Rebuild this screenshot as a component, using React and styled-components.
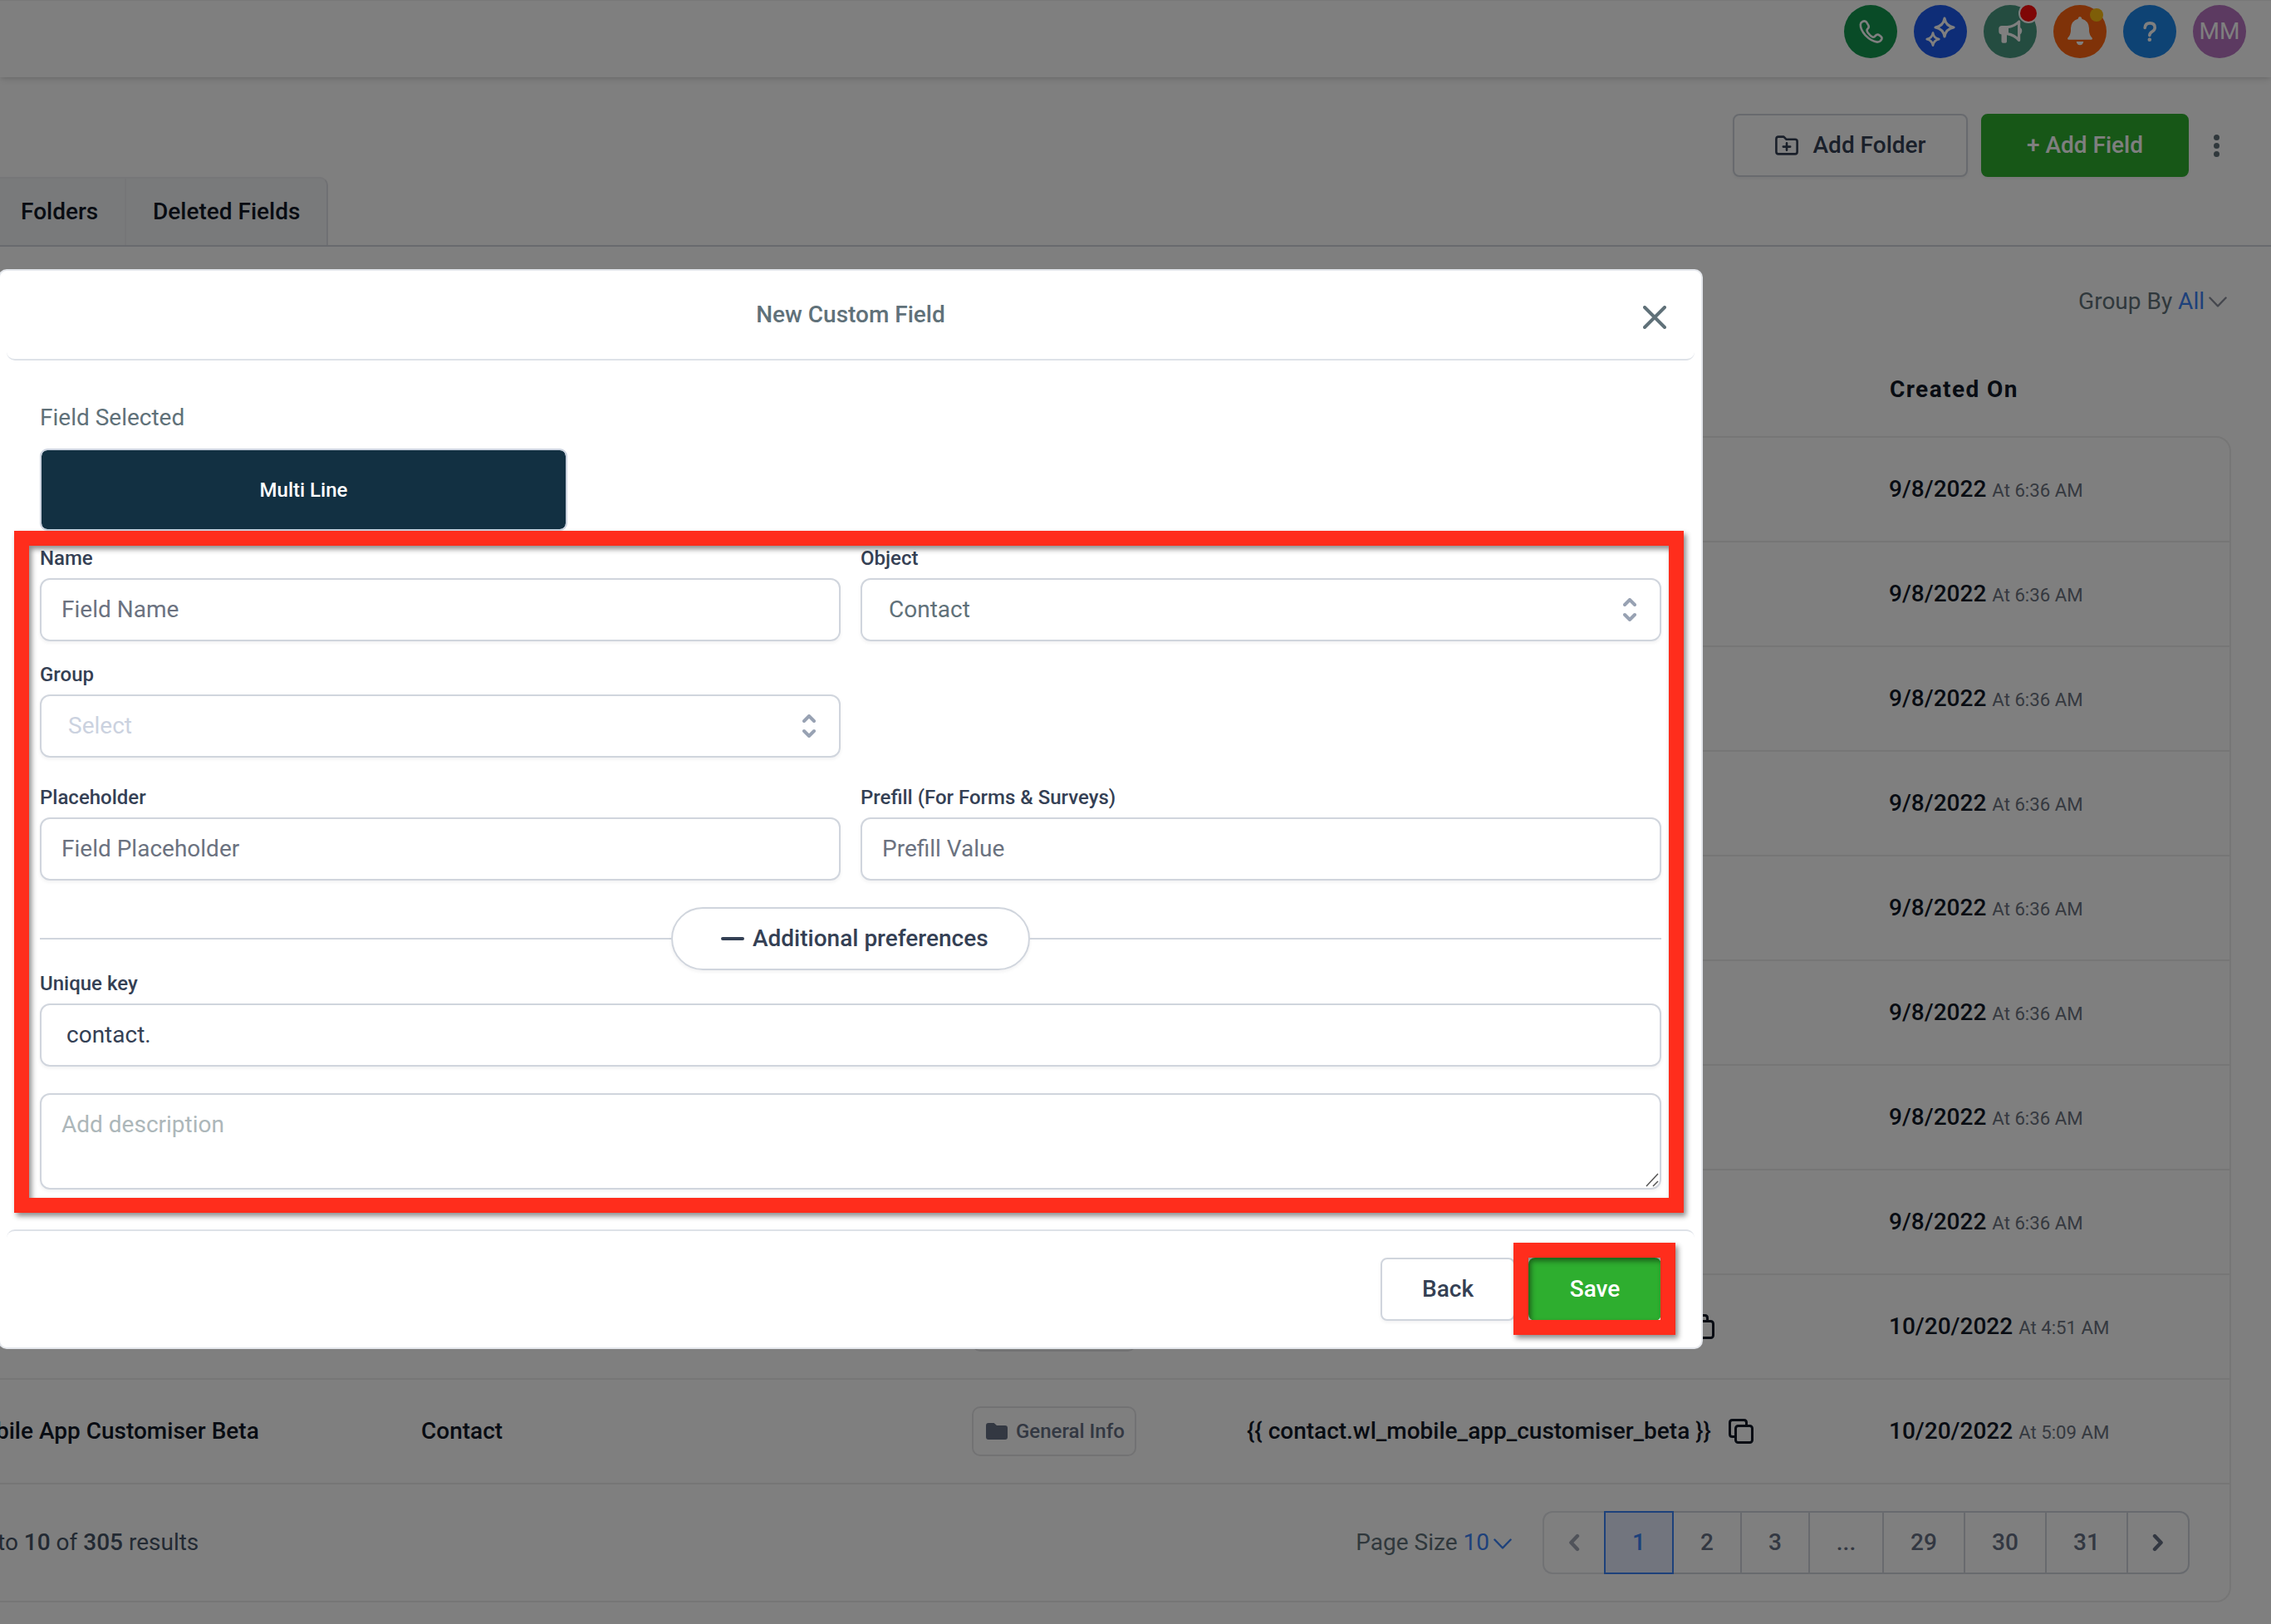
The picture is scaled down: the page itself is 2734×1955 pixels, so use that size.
import React from "react";
import styled, { createGlobalStyle } from "styled-components";

const GlobalStyle = createGlobalStyle`
  * {
    box-sizing: border-box;
  }

  body {
    margin: 0;
    background: #fff;
    font-family: Roboto, "Liberation Sans", sans-serif;
    font-size: 28px;
    line-height: 34px;
    color: #111827;
  }
`;

const Page = styled.div`
  position: relative;
  width: 2734px;
  height: 1955px;
  overflow: hidden;
`;

/* ---------- top bar ---------- */

const TopBar = styled.header`
  display: flex;
  justify-content: flex-end;
  gap: 20px;
  height: 93px;
  padding: 5px 30px 0 0;
  border-top: 1px solid #f0f0f0;
  box-shadow: 0 4px 8px -1px rgba(0, 0, 0, 0.12),
    0 2px 4px -1px rgba(0, 0, 0, 0.06);
`;

const Bubble = styled.div`
  position: relative;
  display: flex;
  align-items: center;
  justify-content: center;
  width: 64px;
  height: 64px;
  border-radius: 50%;
  background: ${({ color }) => color};
  color: #fff;

  svg {
    display: block;
  }
`;

const Badge = styled.span`
  position: absolute;
  top: ${({ $top }) => $top}px;
  right: ${({ $right }) => $right}px;
  width: ${({ $size }) => $size}px;
  height: ${({ $size }) => $size}px;
  border-radius: 50%;
  background: ${({ color }) => color};
  box-shadow: ${({ $ring }) => ($ring ? "0 0 0 2px #fff" : "none")};
`;

/* ---------- page actions and tabs ---------- */

const Actions = styled.div`
  display: flex;
  justify-content: flex-end;
  align-items: center;
  margin-top: 44px;
  padding-right: 62px;
`;

const Button = styled.button`
  display: flex;
  align-items: center;
  justify-content: center;
  width: ${({ $width }) => $width}px;
  height: 76px;
  padding: 0;
  border: 2px solid ${({ $primary }) => ($primary ? "#2eae2f" : "#d0d5dd")};
  border-radius: 8px;
  background: ${({ $primary }) => ($primary ? "#2eae2f" : "#fff")};
  box-shadow: 0 2px 4px rgba(16, 24, 40, 0.06);
  color: ${({ $primary }) => ($primary ? "#fff" : "#344054")};
  font: 500 28px/34px Roboto, sans-serif;

  & + & {
    margin-left: 16px;
  }

  svg {
    margin-right: 18px;
  }
`;

const Kebab = styled.div`
  display: flex;
  flex-direction: column;
  gap: 3px;
  margin-left: 30px;

  i {
    width: 7px;
    height: 7px;
    border-radius: 50%;
    background: #607179;
  }
`;

const Tabs = styled.nav`
  display: flex;
  height: 84px;
  border-bottom: 2px solid #d0d5dd;
`;

const Tab = styled.div`
  width: ${({ $width }) => $width}px;
  padding: 23px 0 0 ${({ $indent }) => $indent}px;
  border-top: 2px solid #ececf0;
  border-right: 2px solid ${({ $last }) => ($last ? "#dfe1e6" : "#ececf0")};
  border-top-right-radius: ${({ $last }) => ($last ? 10 : 0)}px;
  background: #f3f4f6;
  font-weight: 500;
`;

const Muted = styled.span`
  color: #607179;
`;

const Link = styled.span`
  color: #3b82f6;
`;

const GroupBy = styled.div`
  display: flex;
  justify-content: flex-end;
  align-items: center;
  margin-top: 49px;
  padding-right: 53px;
  white-space: pre;

  svg {
    margin: 1px 0 0 5px;
  }
`;

/* ---------- table ---------- */

const columns = "507px 663px 331px 774px 1fr";

const HeadRow = styled.div`
  display: grid;
  grid-template-columns: ${columns};
  width: 2686px;
  margin-top: 72px;
  padding-bottom: 39px;
  font-weight: 700;
  letter-spacing: 1.4px;

  span {
    grid-column: 5;
  }
`;

const Table = styled.div`
  width: 2686px;
  border: 2px solid #ececec;
  border-left: 0;
  border-radius: 0 18px 18px 0;
`;

const Row = styled.div`
  display: grid;
  grid-template-columns: ${columns};
  align-items: center;
  height: 126px;
  border-bottom: 2px solid #ececec;
  font-weight: 500;
  white-space: nowrap;
`;

const Cell = styled.div`
  grid-column: ${({ $col }) => $col};
  display: flex;
  align-items: center;
  margin-left: ${({ $shift }) => $shift || 0}px;
`;

const Chip = styled.div`
  display: flex;
  align-items: center;
  height: 60px;
  width: 198px;
  padding-left: 15px;
  border: 2px solid #e4e4e7;
  border-radius: 10px;
  color: #667085;
  font-size: 24px;

  svg {
    margin-right: 10px;
  }
`;

const DateText = styled.div`
  grid-column: 5;
  margin-left: -1px;

  small {
    margin-left: 7px;
    color: #6b7280;
    font-size: 22.2px;
    font-weight: 400;
  }
`;

const TableFoot = styled.div`
  display: flex;
  align-items: center;
  height: 140px;
  padding-right: 48px;
  color: #475467;
  white-space: pre;

  b {
    font-weight: 500;
  }
`;

const Results = styled.span`
  margin-left: -3px;
`;

const PageSize = styled.div`
  display: flex;
  align-items: center;
  margin: 0 37px 0 auto;

  svg {
    margin: 2px 0 0 5px;
  }
`;

const Pager = styled.div`
  display: flex;
  height: 76px;
`;

const PageCell = styled.div`
  display: flex;
  align-items: center;
  justify-content: center;
  width: ${({ $width }) => $width}px;
  border: 2px solid ${({ $active }) => ($active ? "#3b82f6" : "#d0d5dd")};
  border-left-width: ${({ $active }) => ($active ? 2 : 0)}px;
  background: ${({ $active }) => ($active ? "#e4eafc" : "transparent")};
  color: ${({ $active }) => ($active ? "#3b82f6" : "#667085")};
  font-weight: 500;

  &:first-child {
    border: 2px solid #e2e4e8;
    border-right: 0;
    border-radius: 12px 0 0 12px;
  }

  &:last-child {
    border-radius: 0 12px 12px 0;
  }
`;

/* ---------- modal ---------- */

const Backdrop = styled.div`
  position: absolute;
  inset: 0;
  padding-top: 324px;
  background: rgba(0, 0, 0, 0.5);
`;

const Dialog = styled.section`
  position: relative;
  width: 2052px;
  height: 1300px;
  margin-left: -2px;
  border: 2px solid #e4e7ec;
  border-radius: 10px;
  background: #fff;
`;

const DialogHead = styled.div`
  display: grid;
  grid-template-columns: 1fr auto 1fr;
  align-items: center;
  height: 108px;
  margin: 0 8px;
  padding-right: 34px;
  padding-left: 34px;
  border-bottom: 2px solid #dee2e8;
  border-radius: 10px;
  color: #607179;
  font-weight: 500;

  h2 {
    grid-column: 2;
    margin: 0;
    font: inherit;
  }

  svg {
    justify-self: end;
    margin-top: 5px;
  }
`;

const DialogBody = styled.div`
  height: 1046px;
  padding: 52px 48px 0;
`;

const FieldType = styled.div`
  display: flex;
  align-items: center;
  justify-content: center;
  width: 635px;
  height: 99px;
  margin: 20px 0 19px;
  border: 2px solid #cbd2df;
  border-radius: 9px;
  background: #123042;
  background-clip: padding-box;
  color: #fff;
  font-size: 24px;
  font-weight: 500;
`;

const FormRow = styled.div`
  display: grid;
  grid-template-columns: 1fr 1fr;
  column-gap: 24px;
  margin-bottom: ${({ $gap }) => $gap}px;
`;

const Label = styled.div`
  height: 28px;
  margin-bottom: 10px;
  color: #344054;
  font-size: 24px;
  font-weight: 500;
  line-height: 28px;
`;

const Control = styled.div`
  display: flex;
  justify-content: space-between;
  align-items: center;
  height: 76px;
  padding: 0 28px 0 ${({ $indent }) => $indent || 24}px;
  border: 2px solid #d0d5dd;
  border-radius: 12px;
  box-shadow: 0 2px 4px rgba(16, 24, 40, 0.06);
  color: ${({ color }) => color || "#6b7280"};
`;

const TextArea = styled(Control)`
  position: relative;
  align-items: flex-start;
  height: 116px;
  margin-top: 32px;
  padding-top: 19px;

  svg {
    position: absolute;
    right: 1px;
    bottom: 1px;
  }
`;

const Divider = styled.div`
  display: flex;
  align-items: center;
  margin-bottom: 2px;

  &::before,
  &::after {
    content: "";
    flex: 1;
    height: 2px;
    background: #d0d5dd;
  }
`;

const Pill = styled.div`
  display: flex;
  align-items: center;
  width: 432px;
  height: 76px;
  padding-left: 58px;
  border: 2px solid #d0d5dd;
  border-radius: 38px;
  box-shadow: 0 2px 4px rgba(16, 24, 40, 0.06);
  color: #344054;
  font-weight: 500;

  i {
    width: 28px;
    height: 4px;
    margin-right: 10px;
    border-radius: 2px;
    background: #344054;
  }
`;

const DialogFoot = styled.div`
  display: flex;
  justify-content: flex-end;
  margin: 0 8px;
  padding: 32px 40px 0 0;
  border-top: 2px solid #dee2e8;
  border-radius: 10px;
`;

const Highlight = styled.div`
  position: absolute;
  left: ${({ $x }) => $x}px;
  top: ${({ $y }) => $y}px;
  width: ${({ $w }) => $w}px;
  height: ${({ $h }) => $h}px;
  border: 18px solid #ff2d1c;
  filter: drop-shadow(3px 4px 3px rgba(0, 0, 0, 0.45));
`;

/* ---------- icons ---------- */

const PhoneIcon = () => (
  <svg width="64" height="64" viewBox="0 0 64 64" fill="none" stroke="#fff" strokeWidth="2.6" strokeLinejoin="round">
    <path d="M22 20.2Q25 18.2 27 20.6L29.3 24.4Q30.6 27 28.4 28.8Q26.6 30.4 28.6 33.2Q31.6 37.2 34.4 38.6Q36.4 39.2 37.8 37Q40 34.6 42.8 36.6Q46.2 38.8 45.4 41Q43.6 44.6 40 44.6Q33 44 25.6 36.4Q19.6 29.4 19.8 23.6Q20 21.4 22 20.2Z" />
  </svg>
);

const SparkleIcon = () => (
  <svg width="64" height="64" viewBox="0 0 64 64" fill="none" stroke="#fff" strokeWidth="3.2" strokeLinejoin="round">
    <path d="M37 16.2Q38.6 25.2 48 27Q38.6 28.8 37 38Q35.4 28.8 26 27Q35.4 25.2 37 16.2Z" />
    <path d="M23 33.6Q24 39.8 30.2 41.2Q24 42.6 23 48.6Q22 42.6 15.8 41.2Q22 39.8 23 33.6Z" strokeWidth="2.8" />
  </svg>
);

const MegaphoneIcon = () => (
  <svg width="64" height="64" viewBox="0 0 64 64">
    <path d="M22 25H30V35.5H28V44Q28 45.7 26.3 45.7H23.2Q21.5 45.7 21.5 44V35.5Q18.3 35 18.3 32V28.5Q18.3 25 22 25Z" fill="#fff" />
    <path d="M28.4 26.6Q37 26 42.6 20V42.4Q37 36 28.4 34.6Z" fill="none" stroke="#fff" strokeWidth="3.2" strokeLinejoin="round" />
    <path d="M43.6 26.6Q46.2 28.4 46.2 31.2Q46.2 34 43.6 35.8Z" fill="#fff" />
  </svg>
);

const BellIcon = () => (
  <svg width="64" height="64" viewBox="0 0 64 64" fill="#fff">
    <path d="M32 14Q34 14 34.4 16.8Q42.4 19 43 28V31Q43.2 36 46.6 39.6Q47.6 41.7 45.6 41.7H18.4Q16.4 41.7 17.4 39.6Q20.8 36 21 31V28Q21.6 19 29.6 16.8Q30 14 32 14Z" />
    <path d="M27.7 44H36.3Q35.6 48.2 32 48.2Q28.4 48.2 27.7 44Z" />
  </svg>
);

const HelpIcon = () => (
  <svg width="64" height="64" viewBox="0 0 64 64" fill="none" stroke="#fff" strokeWidth="3.6" strokeLinecap="round">
    <path d="M26.2 27.4Q26.6 21.9 32.2 21.9Q38.2 22 38.2 27.2Q38.2 30 35 32Q31.8 34 31.8 36.6" />
    <circle cx="31.8" cy="41.8" r="2.3" fill="#fff" stroke="none" />
  </svg>
);

const FolderPlusIcon = () => (
  <svg width="28" height="24" viewBox="0 0 28 24" fill="none" stroke="#344054" strokeWidth="2.6" strokeLinecap="round" strokeLinejoin="round">
    <path d="M4 1.6H10.4L13.6 4.8H24Q26.6 4.8 26.6 7.2V19.8Q26.6 22.4 24 22.4H4Q1.4 22.4 1.4 19.8V4.2Q1.4 1.6 4 1.6Z" />
    <path d="M14 9.4V17.8M9.8 13.6H18.2" />
  </svg>
);

const FolderIcon = () => (
  <svg width="26" height="20" viewBox="0 0 26 20" fill="#667085">
    <path d="M3 0H9.6L13 3H23Q26 3 26 6V17Q26 20 23 20H3Q0 20 0 17V3Q0 0 3 0Z" />
  </svg>
);

const CopySvg = styled.svg`
  margin-left: ${({ $gap }) => $gap}px;
`;

const CopyIcon = ({ gap }) => (
  <CopySvg $gap={gap} width="30" height="30" viewBox="0 0 30 30" fill="none" stroke="#111827" strokeWidth="3" strokeLinejoin="round">
    <rect x="8.5" y="8.5" width="20" height="20" rx="3" />
    <path d="M8 21.5H4.5Q1.5 21.5 1.5 18.5V4.5Q1.5 1.5 4.5 1.5H18.5Q21.5 1.5 21.5 4.5V8" />
  </CopySvg>
);

const ChevronDown = ({ color }) => (
  <svg width="22" height="13" viewBox="0 0 22 13" fill="none" stroke={color} strokeWidth="2.4" strokeLinecap="round" strokeLinejoin="round">
    <path d="M1.4 1.5L11 11.5L20.6 1.5" />
  </svg>
);

const SelectArrows = () => (
  <svg width="16" height="28" viewBox="0 0 16 28" fill="none" stroke="#98a2b3" strokeWidth="4" strokeLinecap="round" strokeLinejoin="round">
    <path d="M2 8L8 2L14 8M2 20L8 26L14 20" />
  </svg>
);

const Arrow = ({ d, color }) => (
  <svg width="14" height="22" viewBox="0 0 14 22" fill="none" stroke={color} strokeWidth="4.4" strokeLinecap="round" strokeLinejoin="round">
    <path d={d} />
  </svg>
);

const CloseIcon = () => (
  <svg width="28" height="28" viewBox="0 0 28 28" fill="none" stroke="#607179" strokeWidth="4" strokeLinecap="round">
    <path d="M2 2L26 26M26 2L2 26" />
  </svg>
);

const ResizeGrip = () => (
  <svg width="16" height="17" viewBox="0 0 16 17" stroke="#555" strokeWidth="1.5">
    <path d="M1 16L15 1M9 16L15 10" />
  </svg>
);

/* ---------- data ---------- */

const rows = [
  { id: 1, date: "9/8/2022", time: "At 6:36 AM" },
  { id: 2, date: "9/8/2022", time: "At 6:36 AM" },
  { id: 3, date: "9/8/2022", time: "At 6:36 AM" },
  { id: 4, date: "9/8/2022", time: "At 6:36 AM" },
  { id: 5, date: "9/8/2022", time: "At 6:36 AM" },
  { id: 6, date: "9/8/2022", time: "At 6:36 AM" },
  { id: 7, date: "9/8/2022", time: "At 6:36 AM" },
  { id: 8, date: "9/8/2022", time: "At 6:36 AM" },
  { id: 9, date: "10/20/2022", time: "At 4:51 AM", covered: true },
  {
    id: 10,
    name: "bile App Customiser Beta",
    object: "Contact",
    folder: "General Info",
    fieldKey: "{{ contact.wl_mobile_app_customiser_beta }}",
    date: "10/20/2022",
    time: "At 5:09 AM",
  },
];

const pages = [
  { label: "2", width: 82 },
  { label: "3", width: 82 },
  { label: "...", width: 89 },
  { label: "29", width: 98 },
  { label: "30", width: 98 },
  { label: "31", width: 98 },
];

const Field = ({ label, children, select, color }) => (
  <div>
    <Label>{label}</Label>
    <Control $indent={select ? 32 : 24} color={color}>
      {children}
      {select && <SelectArrows />}
    </Control>
  </div>
);

const TableRow = ({ row }) => (
  <Row>
    {row.name && (
      <Cell $col={1} $shift={-5}>
        {row.name}
      </Cell>
    )}
    {row.object && <Cell $col={2}>{row.object}</Cell>}
    {(row.folder || row.covered) && (
      <Cell $col={3}>
        <Chip>
          {row.folder && (
            <>
              <FolderIcon />
              {row.folder}
            </>
          )}
        </Chip>
      </Cell>
    )}
    {row.fieldKey && (
      <Cell $col={4}>
        {row.fieldKey}
        <CopyIcon gap={21} />
      </Cell>
    )}
    {row.covered && (
      <Cell $col={4}>
        <CopyIcon gap={533} />
      </Cell>
    )}
    <DateText>
      {row.date}
      <small>{row.time}</small>
    </DateText>
  </Row>
);

const NewFieldDialog = () => (
  <Backdrop>
    <Dialog>
      <DialogHead>
        <h2>New Custom Field</h2>
        <CloseIcon />
      </DialogHead>
      <DialogBody>
        <Muted>Field Selected</Muted>
        <FieldType>Multi Line</FieldType>
        <FormRow $gap={26}>
          <Field label="Name">Field Name</Field>
          <Field label="Object" select color="#607179">
            Contact
          </Field>
        </FormRow>
        <FormRow $gap={34}>
          <Field label="Group" select color="#cbd2df">
            Select
          </Field>
        </FormRow>
        <FormRow $gap={32}>
          <Field label="Placeholder">Field Placeholder</Field>
          <Field label="Prefill (For Forms &amp; Surveys)">Prefill Value</Field>
        </FormRow>
        <Divider>
          <Pill>
            <i />
            Additional preferences
          </Pill>
        </Divider>
        <Label>Unique key</Label>
        <Control $indent={30} color="#344054">
          contact.
        </Control>
        <TextArea color="#adb7ba">
          Add description
          <ResizeGrip />
        </TextArea>
      </DialogBody>
      <DialogFoot>
        <Button $width={162}>Back</Button>
        <Button $width={160} $primary>
          Save
        </Button>
      </DialogFoot>
      <Highlight $x={17} $y={313} $w={2010} $h={821} />
      <Highlight $x={1822} $y={1170} $w={195} $h={111} />
    </Dialog>
  </Backdrop>
);

const App = () => {
  return (
    <>
      <GlobalStyle />
      <Page>
        <TopBar>
          <Bubble color="#12964f">
            <PhoneIcon />
          </Bubble>
          <Bubble color="#1d5aee">
            <SparkleIcon />
          </Bubble>
          <Bubble color="#489880">
            <MegaphoneIcon />
            <Badge $top={0} $right={0} $size={20} $ring color="#ff0c0c" />
          </Bubble>
          <Bubble color="#ff6410">
            <BellIcon />
            <Badge $top={4} $right={4} $size={16} color="#fcbc10" />
          </Bubble>
          <Bubble color="#1c86e8">
            <HelpIcon />
          </Bubble>
          <Bubble color="#b874c2">MM</Bubble>
        </TopBar>

        <Actions>
          <Button $width={283}>
            <FolderPlusIcon />
            Add Folder
          </Button>
          <Button $width={250} $primary>
            + Add Field
          </Button>
          <Kebab>
            <i />
            <i />
            <i />
          </Kebab>
        </Actions>

        <Tabs>
          <Tab $width={152} $indent={25}>
            Folders
          </Tab>
          <Tab $width={243} $indent={32} $last>
            Deleted Fields
          </Tab>
        </Tabs>

        <GroupBy>
          <Muted>Group By </Muted>
          <Link>All</Link>
          <ChevronDown color="#8a8f9c" />
        </GroupBy>

        <HeadRow>
          <span>Created On</span>
        </HeadRow>
        <Table>
          {rows.map((row) => (
            <TableRow key={row.id} row={row} />
          ))}
          <TableFoot>
            <Results>
              to <b>10</b> of <b>305</b> results
            </Results>
            <PageSize>
              <Muted>Page Size </Muted>
              <Link>10</Link>
              <ChevronDown color="#3b82f6" />
            </PageSize>
            <Pager>
              <PageCell $width={74}>
                <Arrow d="M11 3L3.4 11L11 19" color="#a0a6b4" />
              </PageCell>
              <PageCell $width={84} $active>
                1
              </PageCell>
              {pages.map(({ label, width }) => (
                <PageCell key={label} $width={width}>
                  {label}
                </PageCell>
              ))}
              <PageCell $width={74}>
                <Arrow d="M3 3L10.6 11L3 19" color="#667085" />
              </PageCell>
            </Pager>
          </TableFoot>
        </Table>

        <NewFieldDialog />
      </Page>
    </>
  );
};

export default App;
